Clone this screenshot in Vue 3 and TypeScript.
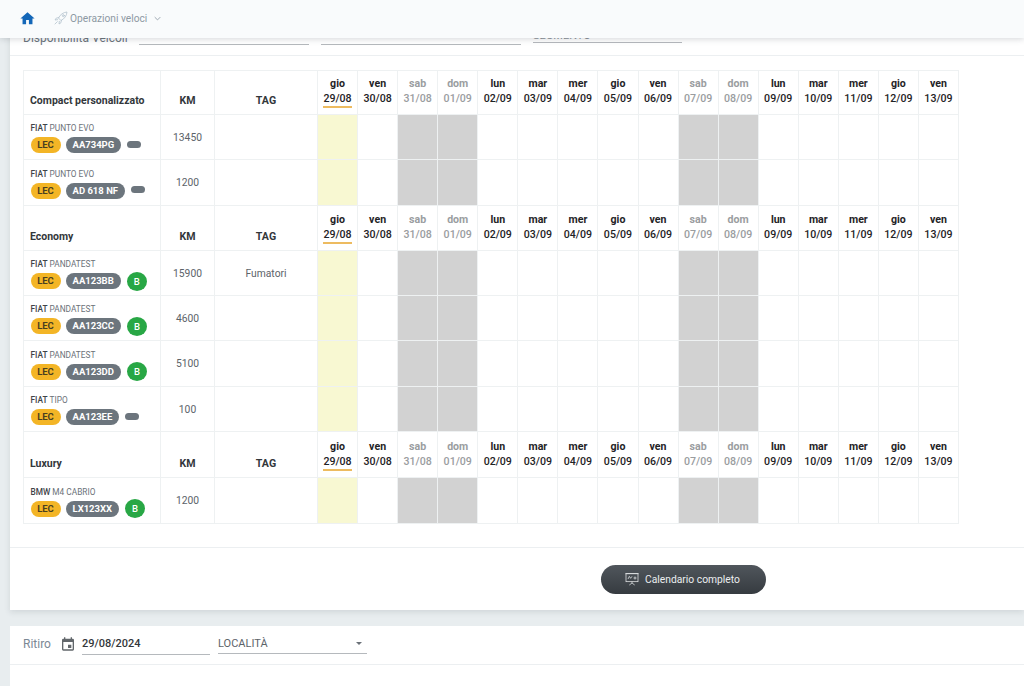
<template>
  <div class="page">
    <header class="topbar">
      <svg class="home" viewBox="0 0 24 24"><path d="M10 20v-6h4v6h5v-8h3L12 3 2 12h3v8z" /></svg>
      <svg class="rocket" viewBox="0 0 24 24" fill="none" stroke="#b4c3ce" stroke-width="1.2" stroke-linejoin="round" stroke-linecap="round">
        <path d="M8.5 11.5C11 6.500 15.500 3.500 21 3c-.5 5.500-3.500 10-8.500 12.500z" />
        <circle cx="15.500" cy="8.500" r="1.500" />
        <path d="M8.500 11.500 5 12l-2 3 4-.500M12.500 15.500 12 19l-3 2 .500-4M6.500 17.500 3 21" />
      </svg>
      <span class="quick">Operazioni veloci</span>
      <svg class="chev" viewBox="0 0 10 6" fill="none" stroke="#8d99a3" stroke-width="1.200"><path d="M1 1l4 4 4-4" /></svg>
    </header>

    <section class="card main-card">
      <div class="filters">
        <span class="filter-label">Disponibilità Veicoli</span>
        <span class="line line-a"></span>
        <span class="line line-b"></span>
        <span class="line line-c"><span>SEGMENTO</span></span>
      </div>

      <div class="table-wrap">
        <table class="planner">
          <colgroup>
            <col class="col-name" />
            <col class="col-km" />
            <col class="col-tag" />
            <col v-for="d in days" :key="d.date" class="col-day" />
          </colgroup>
          <tbody v-for="group in groups" :key="group.name">
            <tr class="head-row">
              <th class="group-name">{{ group.name }}</th>
              <th class="km-head">KM</th>
              <th class="km-head">TAG</th>
              <th v-for="(d, i) in days" :key="d.date" class="day-head" :class="{ weekend: d.weekend }">
                <div>{{ d.name }}</div>
                <div class="date" :class="{ today: i === 0 }">{{ d.date }}</div>
              </th>
            </tr>
            <tr v-for="car in group.cars" :key="car.plate" class="car-row">
              <td class="car">
                <div class="model"><b>{{ car.make }}</b> {{ car.model }}</div>
                <div class="badges">
                  <span class="pill lec">LEC</span>
                  <span class="pill plate">{{ car.plate }}</span>
                  <span v-if="car.fuel" class="pill fuel">{{ car.fuel }}</span>
                  <span v-else class="pill empty"></span>
                </div>
              </td>
              <td class="num">{{ car.km }}</td>
              <td class="num">{{ car.tag }}</td>
              <td v-for="(d, i) in days" :key="d.date" :class="{ closed: d.weekend, now: i === 0 }"></td>
            </tr>
          </tbody>
        </table>
      </div>

      <div class="actions">
        <button class="calendar-btn">
          <svg viewBox="0 0 24 24" fill="none" stroke="#e8eaec" stroke-width="1.100">
            <rect x="3" y="4" width="18" height="12" />
            <path d="M2 4h20M12 16v2M8 21l4-3 4 3M6 12l2-4 2 3 2-3M15 10.500a1.500 1.500 0 1 0 3 0 1.500 1.500 0 1 0-3 0" />
          </svg>
          Calendario completo
        </button>
      </div>
    </section>

    <section class="card pickup">
      <div class="pickup-row">
        <span class="pickup-label">Ritiro</span>
        <svg class="cal" viewBox="0 0 24 24"><path d="M19 4h-1V2h-2v2H8V2H6v2H5a2 2 0 0 0-2 2v14a2 2 0 0 0 2 2h14a2 2 0 0 0 2-2V6a2 2 0 0 0-2-2zm0 16H5V9h14zM12 13h5v5h-5z" /></svg>
        <span class="field date-field">29/08/2024</span>
        <span class="field place-field">LOCALITÀ<i class="caret"></i></span>
      </div>
    </section>
  </div>
</template>

<script setup lang="ts">
interface Day {
  name: string
  date: string
  weekend: boolean
}

interface Car {
  make: string
  model: string
  plate: string
  fuel: string
  km: number
  tag: string
}

const names = ['gio', 'ven', 'sab', 'dom', 'lun', 'mar', 'mer']

const days: Day[] = Array.from({ length: 16 }, (_, i) => {
  const d = new Date(2024, 7, 29 + i)
  const dd = String(d.getDate()).padStart(2, '0')
  const mm = String(d.getMonth() + 1).padStart(2, '0')
  return { name: names[i % 7], date: `${dd}/${mm}`, weekend: i % 7 === 2 || i % 7 === 3 }
})

const groups: { name: string; cars: Car[] }[] = [
  {
    name: 'Compact personalizzato',
    cars: [
      { make: 'FIAT', model: 'PUNTO EVO', plate: 'AA734PG', fuel: '', km: 13450, tag: '' },
      { make: 'FIAT', model: 'PUNTO EVO', plate: 'AD 618 NF', fuel: '', km: 1200, tag: '' }
    ]
  },
  {
    name: 'Economy',
    cars: [
      { make: 'FIAT', model: 'PANDATEST', plate: 'AA123BB', fuel: 'B', km: 15900, tag: 'Fumatori' },
      { make: 'FIAT', model: 'PANDATEST', plate: 'AA123CC', fuel: 'B', km: 4600, tag: '' },
      { make: 'FIAT', model: 'PANDATEST', plate: 'AA123DD', fuel: 'B', km: 5100, tag: '' },
      { make: 'FIAT', model: 'TIPO', plate: 'AA123EE', fuel: '', km: 100, tag: '' }
    ]
  },
  {
    name: 'Luxury',
    cars: [{ make: 'BMW', model: 'M4 CABRIO', plate: 'LX123XX', fuel: 'B', km: 1200, tag: '' }]
  }
]
</script>

<style>
html,
body {
  margin: 0;
  height: 100%;
  overflow: hidden;
  background: #e8edef;
}
</style>

<style scoped>
.page {
  position: relative;
  height: 686px;
  overflow: hidden;
  padding-left: 10px;
  font-family: Roboto, 'Liberation Sans', sans-serif;
  color: #2b2f33;
}

.topbar {
  position: absolute;
  top: 0;
  left: 0;
  right: 0;
  height: 38px;
  box-sizing: border-box;
  z-index: 5;
  display: flex;
  align-items: center;
  padding: 0 0 2px 19px;
  background: #f9fbfc;
  box-shadow: 0 1px 6px rgba(60, 70, 80, 0.22);
}

.home {
  width: 17px;
  height: 17px;
  fill: #1467b8;
}

.rocket {
  width: 16px;
  height: 16px;
  margin-left: 17px;
}

.quick {
  margin-left: 1px;
  font-size: 10.2px;
  color: #8d99a3;
}

.chev {
  width: 7px;
  height: 5px;
  margin-left: 7px;
}

.card {
  background: #fff;
}

.main-card {
  height: 610px;
  box-shadow: 0 2px 6px rgba(60, 70, 80, 0.14);
}

.filters {
  display: flex;
  align-items: flex-end;
  height: 56px;
  box-sizing: border-box;
  padding: 0 0 10px 13px;
  border-bottom: 1px solid #eceff1;
  font-size: 12px;
  color: #6b747c;
}

.filter-label {
  width: 116px;
}

.line {
  height: 1px;
  background: #b5b9bd;
  margin-right: 12px;
  position: relative;
}

.line-a {
  width: 170px;
}

.line-b {
  width: 200px;
}

.line-c {
  width: 149px;
  margin-bottom: 2px;
}

.line-c span {
  position: absolute;
  left: 0;
  bottom: 1px;
  font-size: 11px;
  color: #8b9197;
}

.table-wrap {
  padding: 14px 0 23px 13px;
}

.planner {
  border-collapse: collapse;
  table-layout: fixed;
  width: 936px;
  font-size: 10.6px;
}

.col-name {
  width: 137px;
}

.col-km {
  width: 54px;
}

.col-tag {
  width: 103px;
}

.planner th,
.planner td {
  border: 1px solid #eef1f2;
  padding: 0;
}

.head-row,
.car-row {
  height: 45px;
}

/* the rows are not all the same height in the original */
tbody:first-of-type .head-row {
  height: 44px;
}

tbody:first-of-type .car-row:last-child,
tbody:nth-of-type(2) .car-row:nth-child(4),
tbody:last-of-type tr {
  height: 46px;
}

.group-name {
  text-align: left;
  padding: 15px 0 0 6px !important;
  font-weight: 700;
  font-size: 10.5px;
  color: #33373b;
}

.km-head {
  padding-top: 15px !important;
  font-weight: 700;
  color: #33373b;
}

.day-head {
  font-weight: 700;
  line-height: 15px;
  color: #1f2326;
  padding-bottom: 4px !important;
}

tbody:not(:first-of-type) .group-name,
tbody:not(:first-of-type) .km-head {
  padding-top: 17px !important;
}

tbody:not(:first-of-type) .day-head {
  padding-bottom: 2px !important;
}

.day-head.weekend {
  color: #9a9d9f;
}

.date {
  font-weight: 500;
  width: fit-content;
  margin: 0 auto;
}

.date.today {
  box-shadow: 0 2px 0 #edbb60;
}

.car {
  padding: 2px 0 0 6.5px !important;
}

.model {
  font-size: 8.3px;
  line-height: 10px;
  color: #6b7178;
}

.model b {
  font-weight: 500;
  color: #3f4448;
}

.badges {
  display: flex;
  align-items: center;
  margin-top: 4px;
  height: 16px;
}

.pill {
  display: inline-block;
  height: 16px;
  line-height: 16px;
  border-radius: 8px;
  font-size: 9.5px;
  font-weight: 700;
  text-align: center;
}

.lec {
  width: 30px;
  background: #f3b526;
  color: #4a4020;
  margin-right: 5px;
}

.plate {
  padding: 0 7px;
  background: #6c757d;
  color: #fff;
  margin-right: 6px;
}

.fuel {
  width: 20px;
  height: 19px;
  line-height: 19px;
  border-radius: 50%;
  background: #28a745;
  color: #fff;
  font-weight: 500;
}

.empty {
  width: 14px;
  height: 7px;
  background: #6c757d;
  margin-top: -2px;
}

.num {
  text-align: center;
  color: #5c6369;
  font-size: 10.3px;
}

.closed {
  background: #d2d2d2;
}

.now {
  background: #f8f8d2;
}

.actions {
  height: 62px;
  border-top: 1px solid #eceff1;
  display: flex;
  align-items: center;
  padding-left: 591px;
}

.calendar-btn {
  display: flex;
  align-items: center;
  gap: 5px;
  width: 165px;
  height: 29px;
  padding: 0 0 0 23px;
  border: none;
  border-radius: 15px;
  background: linear-gradient(#50565c, #363b40);
  color: #eceef0;
  font-family: inherit;
  font-size: 10.3px;
}

.calendar-btn svg {
  width: 16px;
  height: 16px;
}

.pickup {
  margin-top: 16px;
  height: 60px;
}

.pickup-row {
  display: flex;
  align-items: center;
  height: 39px;
  box-sizing: border-box;
  padding: 0 0 2px 13px;
  border-bottom: 1px solid #eceff1;
  font-size: 11px;
}

.pickup-label {
  width: 37px;
  font-size: 12px;
  color: #7b8894;
}

.cal {
  width: 16px;
  height: 16px;
  fill: #62676b;
  margin-right: 6px;
}

.field {
  position: relative;
  display: block;
  height: 21px;
  line-height: 20px;
  box-sizing: border-box;
  border-bottom: 1px solid #b5b9bd;
}

.date-field {
  width: 128px;
  font-weight: 500;
  color: #33373b;
  margin-right: 8px;
}

.place-field {
  width: 149px;
  margin-bottom: 1px;
  line-height: 21px;
  color: #5c6369;
}

.caret {
  position: absolute;
  right: 5px;
  top: 9px;
  border: 3.5px solid transparent;
  border-top-color: #6b7178;
  border-bottom: 0;
}
</style>
